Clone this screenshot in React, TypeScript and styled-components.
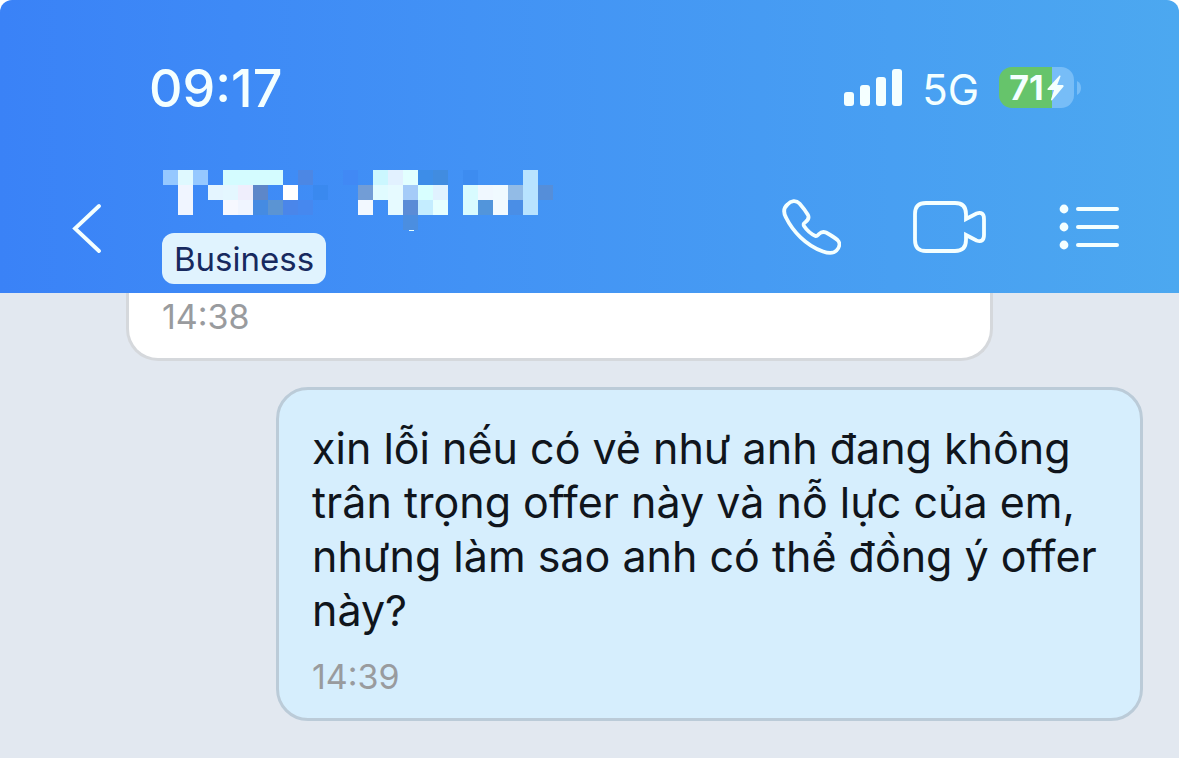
import React from "react";
import styled, { createGlobalStyle } from "styled-components";

const GlobalStyle = createGlobalStyle`
  *, *::before, *::after { box-sizing: border-box; }
  body {
    margin: 0;
    background: #ffffff;
    font-family: Inter, "Liberation Sans", sans-serif;
  }
  #root { min-height: 100vh; display: flex; }
`;

const Screen = styled.div`
  flex: 1;
  min-width: 0;
  display: flex;
  flex-direction: column;
`;

const Header = styled.header`
  border-radius: 12px 12px 0 0;
  background: linear-gradient(90deg, #3a82f7 0%, #4292f5 40%, #4ca8f0 100%);
  color: #f4ffff;
`;

const StatusBar = styled.div`
  display: flex;
  align-items: center;
  justify-content: space-between;
  padding: 59px 98px 0 149px;
  height: 116px;
`;

const Clock = styled.time`
  padding-top: 2px;
  font-size: 52px;
  line-height: 56px;
  font-weight: 500;
  font-feature-settings: "case" 1;
`;

const StatusIcons = styled.div`
  display: flex;
  align-items: center;
  gap: 20px;
`;

const Network = styled.span`
  font-size: 42px;
  line-height: 48px;
  padding-top: 4px;
`;

const Battery = styled.div`
  display: flex;
  align-items: center;
  gap: 3px;
`;

const BatteryBody = styled.div`
  display: flex;
  align-items: center;
  justify-content: center;
  gap: 3px;
  width: 75px;
  height: 41px;
  border-radius: 13px;
  background: linear-gradient(90deg, #66c46b 71%, #77bdf7 71%);
  font-size: 34px;
  line-height: 41px;
  font-weight: 700;
`;

const NavBar = styled.div`
  display: flex;
  padding: 54px 60px 9px 68px;
`;

const IconButton = styled.button`
  display: flex;
  padding: 0;
  border: 0;
  background: none;
  color: inherit;
  cursor: pointer;
`;

const BackButton = styled(IconButton)`
  width: 94px;
  align-items: center;
  padding-top: 2px;
`;

const Contact = styled.div`
  flex: 1;
  min-width: 0;
  display: flex;
  flex-direction: column;
  align-items: flex-start;
`;

const HiddenName = styled.svg`
  display: block;
  margin-left: 1px;
  margin-bottom: 2px;
`;

const Badge = styled.span`
  padding: 1px 12px 0;
  border-radius: 12px;
  background: #e0f3fe;
  color: #17295f;
  font-size: 33px;
  line-height: 50px;
`;

const Actions = styled.div`
  display: flex;
  align-items: center;
  gap: 72px;
`;

const Conversation = styled.main`
  flex: 1;
  display: flex;
  flex-direction: column;
  align-items: flex-start;
  gap: 26px;
  padding: 0 36px 36px 126px;
  background: #e2e8f0;
`;

const Bubble = styled.article<{ $sent?: boolean }>`
  width: calc(100% - 150px);
  align-self: ${(p) => (p.$sent ? "flex-end" : "flex-start")};
  border: 3px solid ${(p) => (p.$sent ? "#bbcbd8" : "#d5d8dc")};
  border-top-width: ${(p) => (p.$sent ? "3px" : "0")};
  border-radius: ${(p) => (p.$sent ? "32px" : "0 0 32px 32px")};
  background: ${(p) => (p.$sent ? "#d6eefd" : "#ffffff")};
  padding: ${(p) => (p.$sent ? "31px 33px 21px" : "4px 33px 21px")};
`;

const Message = styled.p`
  margin: 0 0 20px;
  color: #10151c;
  font-size: 43px;
  line-height: 54px;
`;

const Stamp = styled.time`
  display: block;
  color: #999b9e;
  font-size: 34px;
  line-height: 40px;
  font-feature-settings: "case" 1;
`;

const CELL = 15;
const MOSAIC: Array<[number, number, string]> = [
  [0, 0, "#95c8ff"], [1, 0, "#dff9ff"], [2, 0, "#95c8ff"],
  [4, 0, "#d4fcff"], [5, 0, "#d4fcff"], [6, 0, "#d4fcff"], [7, 0, "#d4fcff"],
  [9, 0, "#4c87e4"], [12, 0, "#4189f5"], [14, 0, "#cbf7ff"], [15, 0, "#e2f1ff"],
  [16, 0, "#e2ffff"], [17, 0, "#3d8de8"], [18, 0, "#418ce0"], [20, 0, "#3d8cf0"],
  [24, 0, "#b8e3ff"],
  [1, 1, "#f0f5ff"], [3, 1, "#e4f5ff"], [4, 1, "#e4f7ff"], [5, 1, "#efeefc"],
  [6, 1, "#5d87c9"], [8, 1, "#ffffff"], [10, 1, "#3a89ef"], [13, 1, "#729dd6"],
  [14, 1, "#e0fbff"], [15, 1, "#e6faff"], [16, 1, "#a4cbf8"], [17, 1, "#d8ffff"],
  [18, 1, "#e0f2ff"], [20, 1, "#d8fbff"], [21, 1, "#f0f8ff"], [22, 1, "#f0faff"],
  [23, 1, "#92bbe6"], [24, 1, "#b8e3ff"], [25, 1, "#558ed9"],
  [1, 2, "#f0f5ff"], [4, 2, "#f6f8ff"], [5, 2, "#f0f5ff"], [6, 2, "#458be2"],
  [7, 2, "#5b94d3"], [8, 2, "#4a86ea"], [9, 2, "#4688ef"], [13, 2, "#f2f8ff"],
  [15, 2, "#e6faff"], [16, 2, "#5b8cd6"], [17, 2, "#c4edff"], [18, 2, "#e6ffff"],
  [20, 2, "#d8fbff"], [21, 2, "#5295db"], [22, 2, "#f2faff"], [23, 2, "#4a8ee6"],
  [24, 2, "#b8e3ff"],
  [16, 3, "#4b8ee0"],
];

function PixelatedName() {
  return (
    <HiddenName width="390" height="61" viewBox="0 0 390 61" shapeRendering="crispEdges" role="img" aria-label="Contact">
      {MOSAIC.map(([col, row, fill]) => (
        <rect key={`${col}-${row}`} x={col * CELL} y={row * CELL} width={CELL} height={CELL} fill={fill} />
      ))}
      <rect x="246" y="60" width="5" height="1" fill="#e6ffff" />
    </HiddenName>
  );
}

function SignalIcon() {
  return (
    <svg width="58" height="37" viewBox="0 0 58 37" fill="currentColor" aria-hidden="true">
      <rect x="0" y="23" width="10" height="14" rx="3" />
      <rect x="16" y="16" width="10" height="21" rx="3" />
      <rect x="32" y="8" width="10" height="29" rx="3" />
      <rect x="48" y="0" width="10" height="37" rx="3" />
    </svg>
  );
}

export default function App() {
  return (
    <>
      <GlobalStyle />
      <Screen>
        <Header>
          <StatusBar>
            <Clock>09:17</Clock>
            <StatusIcons>
              <SignalIcon />
              <Network>5G</Network>
              <Battery>
                <BatteryBody>
                  71
                  <svg width="17" height="26" viewBox="0 0 17 26" fill="currentColor" aria-hidden="true">
                    <path d="M12.5 0.5 L0.5 13.8 Q0 15 1.2 15 H7 L4 24.5 Q4 26 5.3 25 L16.6 11.5 Q17 10 15.6 10 H10.2 L13.5 1.5 Q13.6 0 12.5 .5Z" />
                  </svg>
                </BatteryBody>
                <svg width="4" height="14" viewBox="0 0 4 14" fill="#77bdf7" aria-hidden="true">
                  <path d="M0 0 Q4 2 4 7 Q4 12 0 14Z" />
                </svg>
              </Battery>
            </StatusIcons>
          </StatusBar>
          <NavBar>
            <BackButton type="button" aria-label="Back">
              <svg width="36" height="50" viewBox="0 0 36 50" fill="none" stroke="currentColor" strokeWidth="3.8" strokeLinecap="round" aria-hidden="true">
                <path d="M31 3 L7 25.5 L31 48" />
              </svg>
            </BackButton>
            <Contact>
              <PixelatedName />
              <Badge>Business</Badge>
            </Contact>
            <Actions>
              <IconButton type="button" aria-label="Call">
                <svg width="60" height="58" viewBox="-1 0 60 58" fill="none" stroke="currentColor" strokeWidth="3.8" strokeLinejoin="round" aria-hidden="true">
                  <path d="M5.5 6.5 C9 2.500 14 2 17.500 5.500 C21 9.500 24 13.500 26 17 C27.500 20 26 22 23.500 24 C21.500 25.500 21 26 22 28 C25 32.500 29 36 33.500 38 C35 38.500 35.500 37.500 37 36 C39 34 41.500 33.500 44 34.500 C48.500 37 52 39 55.500 42 C58.500 45 57.500 49.500 54.500 52.500 C51.500 55.500 46.500 55.500 41 53.500 C24 47.500 10.500 33 4 19.500 C1 14 1.500 10 5.500 6.500Z" />
                </svg>
              </IconButton>
              <IconButton type="button" aria-label="Video call">
                <svg width="74" height="52" viewBox="0 0 74 52" fill="none" stroke="currentColor" strokeWidth="3.8" strokeMiterlimit="10" aria-hidden="true">
                  <path d="M53 18 L63.500 12.500 Q71 10 71 18 V34 Q71 42 63.500 39.500 L53 34 V39 Q53 50 42 50 H13 Q2 50 2 39 V13 Q2 2 13 2 H42 Q53 2 53 13 Z" />
                </svg>
              </IconButton>
              <IconButton type="button" aria-label="Options">
                <svg width="60" height="46" viewBox="0 0 60 46" fill="currentColor" aria-hidden="true">
                  {[5, 23, 41].map((y) => (
                    <React.Fragment key={y}>
                      <circle cx="5" cy={y} r="4.400" />
                      <rect x="17" y={y - 2} width="43" height="4" rx="2" />
                    </React.Fragment>
                  ))}
                </svg>
              </IconButton>
            </Actions>
          </NavBar>
        </Header>
        <Conversation>
          <Bubble>
            <Stamp>14:38</Stamp>
          </Bubble>
          <Bubble $sent>
            <Message lang="vi">
              xin lỗi nếu có vẻ như anh đang không trân trọng offer này và nỗ lực của em, nhưng làm sao anh có thể đồng ý offer này?
            </Message>
            <Stamp>14:39</Stamp>
          </Bubble>
        </Conversation>
      </Screen>
    </>
  );
}
